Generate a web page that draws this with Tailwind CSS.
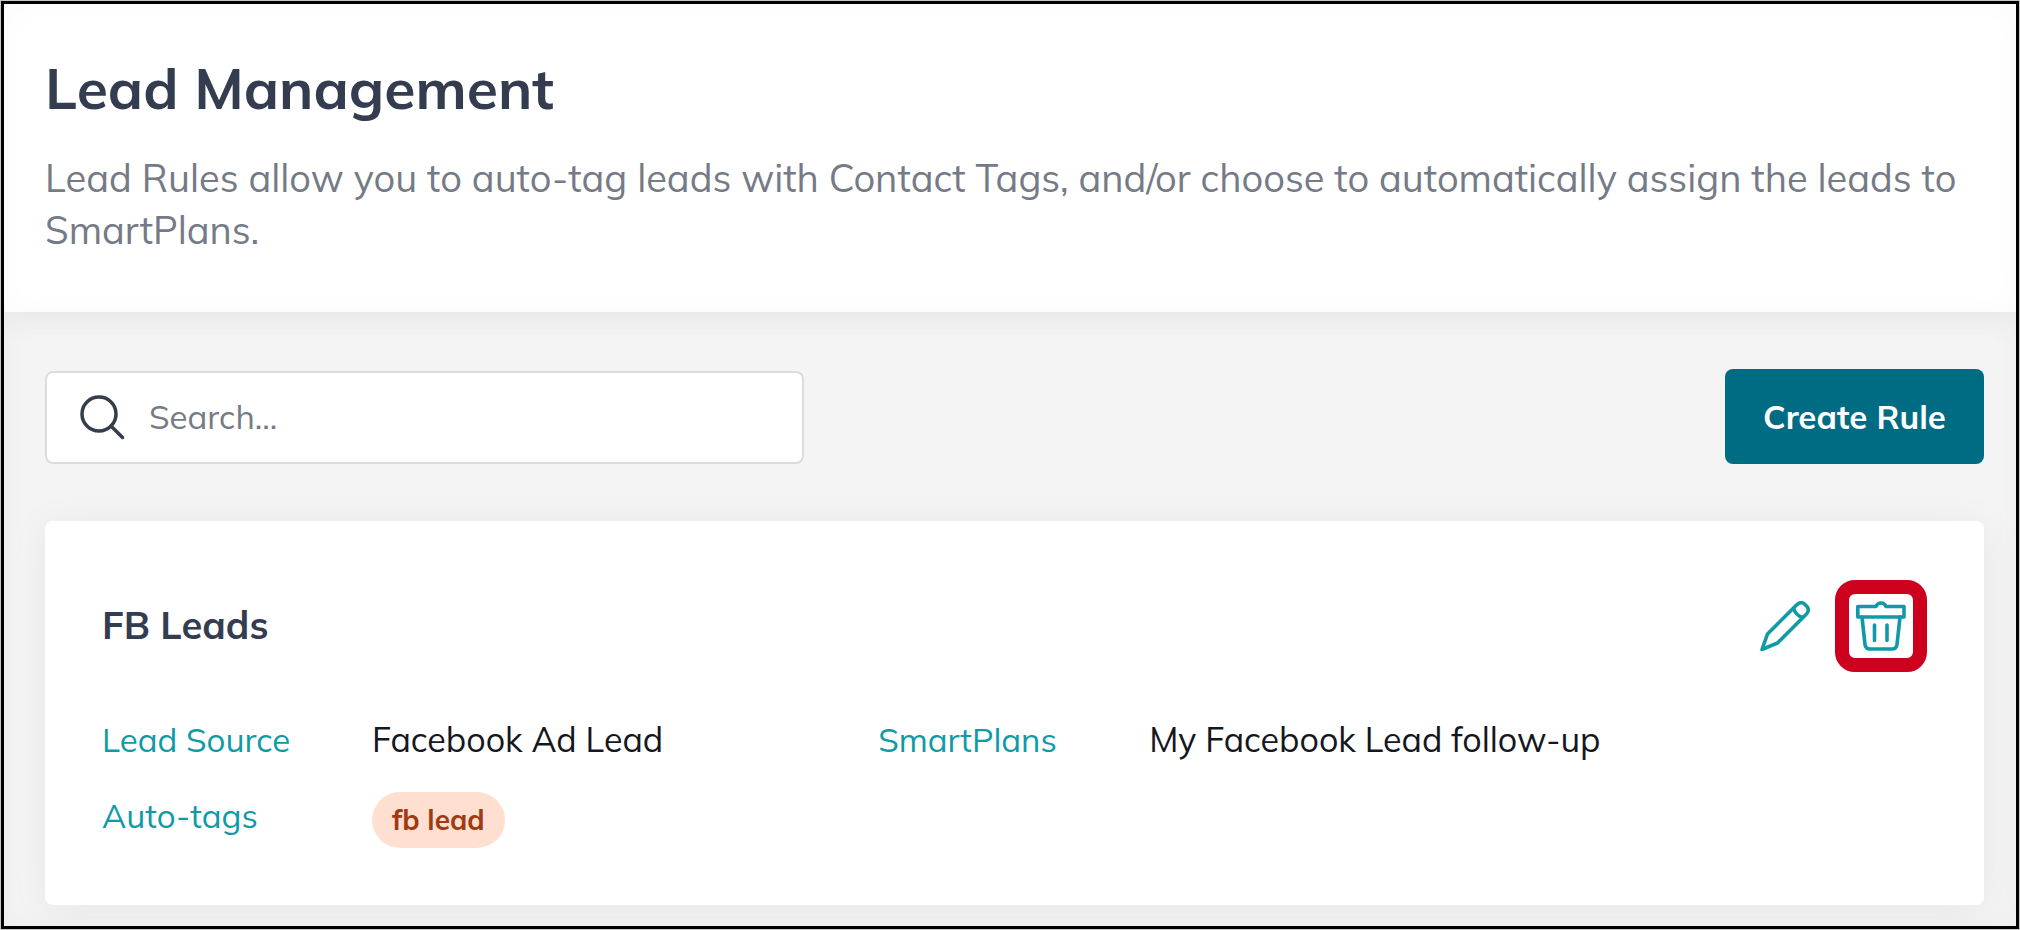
<!DOCTYPE html>
<html lang="en">
  <head>
    <meta charset="UTF-8" />
    <meta name="viewport" content="width=device-width, initial-scale=1.0" />
    <!-- tailwind css -->
    <script src="https://cdn.jsdelivr.net/npm/@tailwindcss/browser@4"></script>
    <title>Lead Management</title>
  </head>
  <body class="min-h-screen flex p-px bg-[#c8c8c8] font-[Mulish,Muli,Lato,sans-serif]">
    <div class="flex-1 flex flex-col border-3 border-black bg-[#f4f4f4] overflow-hidden">
      <!-- page header -->
      <header class="relative bg-white px-[41px] pt-12 pb-14 shadow-[0_0_40px_rgba(0,0,0,0.06),inset_0_0_30px_rgba(0,0,0,0.02)]">
        <h1 class="text-[57px] leading-[72px] font-bold text-[#343d50]">Lead Management</h1>
        <p class="mt-7 text-[38px] leading-[52px] text-[#757b86]">
          Lead Rules allow you to auto-tag leads with Contact Tags, and/or choose to automatically assign the leads to SmartPlans.
        </p>
      </header>

      <main class="flex-1 px-[41px] pr-8 pt-[57px] pb-5 shadow-[inset_0_0_30px_rgba(0,0,0,0.03)]">
        <!-- toolbar -->
        <div class="flex items-end justify-between">
          <label class="flex items-center w-[759px] h-[93px] pl-8 pb-[2px] gap-6 bg-white border-2 border-[#dcdcdc] rounded-lg">
            <svg class="w-[46px] h-[46px] shrink-0" viewBox="0 0 46 46" fill="none" stroke="#343d4b" stroke-width="3.5" stroke-linecap="round">
              <circle cx="20" cy="20" r="17" />
              <path d="M32 32 43.500 43.500" />
            </svg>
            <input type="text" aria-label="Search" placeholder="Search..." class="flex-1 min-w-0 text-[33px] leading-[48px] outline-none placeholder:text-[#757b86]" />
          </label>
          <button class="h-[95px] w-[259px] rounded-lg bg-[#006c83] text-white text-[33px] font-bold">Create Rule</button>
        </div>

        <!-- rule card -->
        <section class="mt-[57px] px-[57px] pt-[59px] pb-[57px] rounded-lg bg-white shadow-[0_4px_40px_rgba(0,0,0,0.06)]">
          <div class="flex items-center justify-between">
            <h2 class="pb-[2px] text-[38px] leading-[52px] font-bold text-[#343d50]">FB Leads</h2>
            <div class="flex items-center gap-[25px]">
              <button aria-label="Edit rule">
                <svg class="w-[50px] h-[50px]" viewBox="0 0 50 50" fill="none" stroke="#0f9aa8" stroke-width="3.6" stroke-linejoin="round">
                  <path d="M2 48.500 7.500 33 36.500 4Q41 -.5 45 3.500L46.500 5Q50.500 9 46 13.500L17.500 42Z" />
                  <path d="M33.500 7.500C35 12 38 15 42.500 16.500" />
                </svg>
              </button>
              <button aria-label="Delete rule" class="p-[7px] border-14 border-[#cd001e] rounded-[20px]">
                <svg class="w-[50px] h-[50px]" viewBox="0 0 50 50" fill="none" stroke="#0f9aa8" stroke-width="3.6" stroke-linejoin="round" stroke-linecap="round">
                  <path d="M1.800 5.500H20C22 .8 28 .8 30 5.500H48V16H1.800Z" />
                  <path d="M6 16 9 43.500Q9.500 48 14 48H36Q40.500 48 41 43.500L44 16" />
                  <path d="M18.500 24V39.500M31 24V39.500" />
                </svg>
              </button>
            </div>
          </div>

          <dl class="mt-11 grid grid-cols-[270px_minmax(0,505fr)_271px_minmax(0,776fr)] gap-y-7 text-[33px] leading-[48px] text-[#0f9aa8]">
            <dt>Lead Source</dt>
            <dd class="text-[34px] text-[#15171e]">Facebook Ad Lead</dd>
            <dt>SmartPlans</dt>
            <dd class="text-[34px] text-[#15171e]">My Facebook Lead follow-up</dd>
            <dt>Auto-tags</dt>
            <dd class="flex">
              <span class="px-5 rounded-full bg-[#ffdfd0] text-[#a03a12] text-[28px] leading-[56px] font-bold">fb lead</span>
            </dd>
          </dl>
        </section>
      </main>
    </div>
  </body>
</html>
